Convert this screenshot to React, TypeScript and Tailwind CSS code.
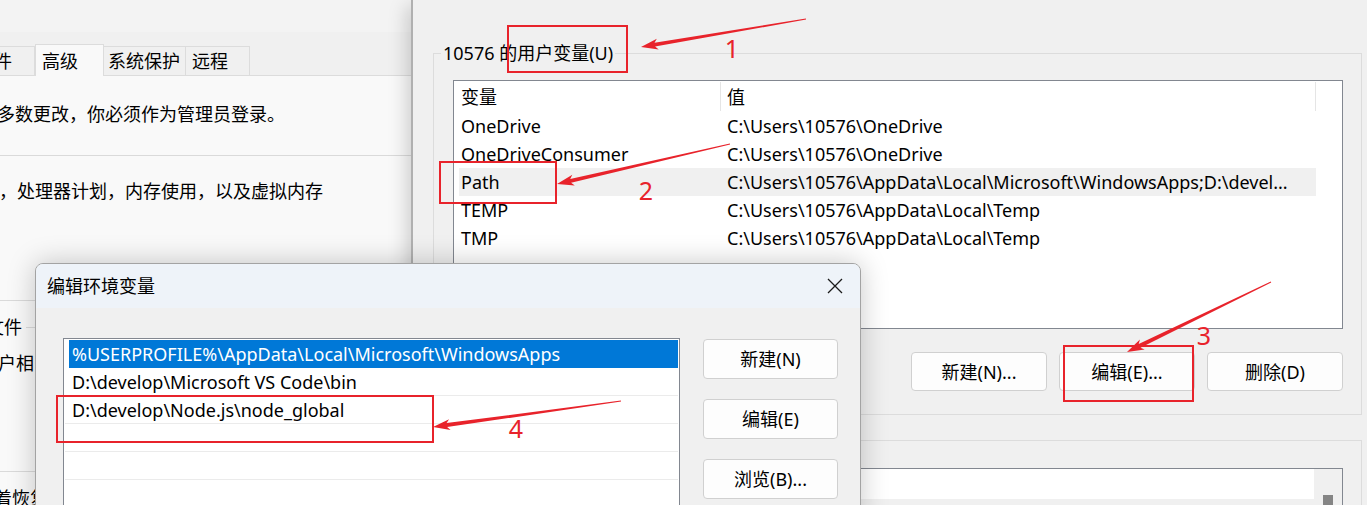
import React from "react";

const RED = "#e8232b";

// tapered annotation arrow, tail -> tip
function arrowPoints(x1: number, y1: number, x2: number, y2: number) {
  const dx = x2 - x1;
  const dy = y2 - y1;
  const len = Math.hypot(dx, dy);
  const ux = dx / len;
  const uy = dy / len;
  const nx = -uy;
  const ny = ux;
  const head = 17;
  const wing = 5.5;
  const neck = 2;
  const tail = 0.5;
  const bx = x2 - ux * head;
  const by = y2 - uy * head;
  const pts = [
    [x1 + nx * tail, y1 + ny * tail],
    [bx + ux * 3 + nx * neck, by + uy * 3 + ny * neck],
    [bx + nx * wing, by + ny * wing],
    [x2, y2],
    [bx - nx * wing, by - ny * wing],
    [bx + ux * 3 - nx * neck, by + uy * 3 - ny * neck],
    [x1 - nx * tail, y1 - ny * tail],
  ];
  return pts.map((p) => `${p[0].toFixed(1)},${p[1].toFixed(1)}`).join(" ");
}

const userVars = [
  ["OneDrive", "C:\\Users\\10576\\OneDrive"],
  ["OneDriveConsumer", "C:\\Users\\10576\\OneDrive"],
  ["Path", "C:\\Users\\10576\\AppData\\Local\\Microsoft\\WindowsApps;D:\\devel..."],
  ["TEMP", "C:\\Users\\10576\\AppData\\Local\\Temp"],
  ["TMP", "C:\\Users\\10576\\AppData\\Local\\Temp"],
];

const pathEntries = [
  "%USERPROFILE%\\AppData\\Local\\Microsoft\\WindowsApps",
  "D:\\develop\\Microsoft VS Code\\bin",
  "D:\\develop\\Node.js\\node_global",
  "",
  "",
  "",
];

function WinButton({ label, className }: { label: string; className: string }) {
  return (
    <div
      className={`flex items-center justify-center rounded-[4px] border border-[#d0d0d0] bg-[#fdfdfd] ${className}`}
    >
      {label}
    </div>
  );
}

function SystemProperties() {
  return (
    <div className="absolute left-0 top-0 flex h-full w-[413px] flex-col overflow-hidden bg-[#f0f0f0]">
      <div className="h-[32px] shrink-0 bg-[#f3f3f3]" />
      <div className="mt-[12px] flex h-[31px] shrink-0 items-end">
        <div className="flex h-[29px] w-[35px] items-center border-r border-t border-[#dcdcdc]">
          <span className="-ml-[6px]">件</span>
        </div>
        <div className="relative z-10 -mb-px flex h-[32px] w-[69px] items-center border-x border-t border-[#dcdcdc] bg-[#f9f9f9] pl-[6px]">
          高级
        </div>
        <div className="flex h-[29px] w-[82px] items-center border-r border-t border-[#dcdcdc] pl-[4px]">
          系统保护
        </div>
        <div className="flex h-[29px] w-[64px] items-center border-r border-t border-[#dcdcdc] pl-[6px]">
          远程
        </div>
      </div>
      <div className="flex-1 border-t border-[#dcdcdc] bg-[#f9f9f9] whitespace-nowrap leading-[24px]">
        <div className="-ml-[3px] mt-[26px] h-[24px]">多数更改，你必须作为管理员登录。</div>
        <div className="mt-[29px] h-px bg-[#dadada]" />
        <div className="-ml-[1px] mt-[23px] h-[24px]">，处理器计划，内存使用，以及虚拟内存</div>
        <div className="mt-[97px] h-px w-[35px] bg-[#dadada]" />
        <div className="mt-[14px] flex h-[24px] items-center">
          <span className="-ml-[14px]">文件</span>
          <div className="ml-[4px] h-px flex-1 bg-[#dcdcdc]" />
        </div>
        <div className="-ml-[2px] mt-[12px] h-[24px]">户相</div>
        <div className="mt-[96px] h-px bg-[#dadada]" />
        <div className="-ml-[6px] mt-[14px] h-[24px]">着恢复</div>
      </div>
    </div>
  );
}

function EnvironmentVariables() {
  return (
    <div className="absolute bottom-0 left-[411px] right-0 top-0 flex flex-col border-l-2 border-[#b0b0b0] bg-[#f0f0f0] shadow-[-10px_0_18px_-6px_rgba(0,0,0,0.18)]">
      <fieldset className="ml-[20px] mr-[5px] mt-[41px] h-[374px] shrink-0 border border-[#dcdcdc] pl-[7px]">
        <legend className="px-[2px] leading-[24px]">10576 的用户变量(U)</legend>
        <div className="ml-[12px] mt-[15px] h-[249px] w-[890px] border border-[#828790] bg-white">
          <div className="flex h-[31px] items-center">
            <div className="my-px flex h-[29px] w-[267px] items-center border-r border-[#e5e5e5] pl-[7px]">
              变量
            </div>
            <div className="my-px flex h-[29px] w-[595px] items-center border-r border-[#e5e5e5] pl-[6px]">
              值
            </div>
          </div>
          {userVars.map(([name, value]) => (
            <div
              key={name}
              className={`ml-[5px] flex h-[28px] w-[857px] items-center whitespace-nowrap ${
                name === "Path" ? "bg-[#f0f0f0]" : ""
              }`}
            >
              <div className="w-[262px] pl-[2px]">{name}</div>
              <div className="flex-1 overflow-hidden pl-[6px]">{value}</div>
            </div>
          ))}
        </div>
        <div className="ml-[12px] mt-[23px] flex w-[890px] justify-end gap-[12px]">
          <WinButton label="新建(N)..." className="h-[39px] w-[136px]" />
          <WinButton label="编辑(E)..." className="h-[39px] w-[136px]" />
          <WinButton label="删除(D)" className="h-[39px] w-[136px]" />
        </div>
      </fieldset>
      <div className="ml-[20px] mr-[5px] mt-[25px] flex-1 border border-b-0 border-[#dcdcdc] pl-[19px] pt-[27px]">
        <div className="flex h-full w-[890px] border border-b-0 border-[#828790] bg-white">
          <div className="flex flex-1 flex-col">
            <div className="h-[30px]" />
            <div className="flex-1 bg-[#f0f0f0]" />
          </div>
          <div className="w-[28px] bg-[#f0f0f0] pl-[9px] pt-[26px]">
            <div className="h-full w-[10px] bg-[#858585]" />
          </div>
        </div>
      </div>
    </div>
  );
}

function EditDialog() {
  return (
    <div className="absolute left-[35px] top-[263px] h-[260px] w-[826px] overflow-hidden rounded-t-[8px] border border-[#a3a3a3] bg-[#f0f0f0] shadow-[0_0_28px_rgba(0,0,0,0.22)]">
      <div className="flex h-[44px] items-center justify-between bg-[#eef3f9] pl-[11px] pr-[17px]">
        <span>编辑环境变量</span>
        <svg width="16" height="16" viewBox="0 0 16 16" fill="none">
          <path d="M1 1L15 15M15 1L1 15" stroke="#1a1a1a" strokeWidth="1.3" />
        </svg>
      </div>
      <div className="flex pl-[27px] pt-[30px]">
        <div className="h-[200px] w-[617px] border border-[#828790] bg-white pt-px whitespace-nowrap">
          {pathEntries.map((entry, i) =>
            i === 0 ? (
              <div key={i} className="ml-px h-[28px]">
                <div className="ml-[4px] mr-[1px] flex h-[28px] items-center bg-[#0078d7] pl-[3px] text-white">
                  {entry}
                </div>
              </div>
            ) : (
              <div
                key={i}
                className="ml-px mr-px flex h-[28px] items-center border-b border-[#ebebeb] pl-[7px]"
              >
                {entry}
              </div>
            )
          )}
        </div>
        <div className="ml-[23px] mt-px flex flex-col gap-[20px]">
          <WinButton label="新建(N)" className="h-[40px] w-[135px]" />
          <WinButton label="编辑(E)" className="h-[40px] w-[135px]" />
          <WinButton label="浏览(B)..." className="h-[40px] w-[135px]" />
        </div>
      </div>
    </div>
  );
}

function Annotations() {
  return (
    <svg className="pointer-events-none absolute inset-0" width="1367" height="505">
      <g fill="none" stroke={RED} strokeWidth="2">
        <rect x="508" y="26" width="119" height="46" />
        <rect x="440" y="162" width="116" height="41" />
        <rect x="1064" y="346" width="129" height="55" />
        <rect x="57" y="396" width="376" height="46" />
      </g>
      <g fill={RED}>
        <polygon points={arrowPoints(806, 19, 641, 47)} />
        <polygon points={arrowPoints(730, 144, 557, 184)} />
        <polygon points={arrowPoints(1271, 282, 1127, 352)} />
        <polygon points={arrowPoints(621, 401, 433, 427)} />
      </g>
      <g fill={RED} fontSize="25" textAnchor="middle" style={{ fontFamily: "'Noto Sans', sans-serif" }}>
        <text x="732" y="58">1</text>
        <text x="646" y="200">2</text>
        <text x="1204" y="345">3</text>
        <text x="516" y="438">4</text>
      </g>
    </svg>
  );
}

export default function App() {
  return (
    <div className="relative h-[505px] w-[1367px] overflow-hidden bg-[#f0f0f0] font-['Noto_Sans','Noto_Sans_CJK_SC',sans-serif] text-[18px] leading-[24px] text-black">
      <SystemProperties />
      <EnvironmentVariables />
      <EditDialog />
      <Annotations />
    </div>
  );
}
